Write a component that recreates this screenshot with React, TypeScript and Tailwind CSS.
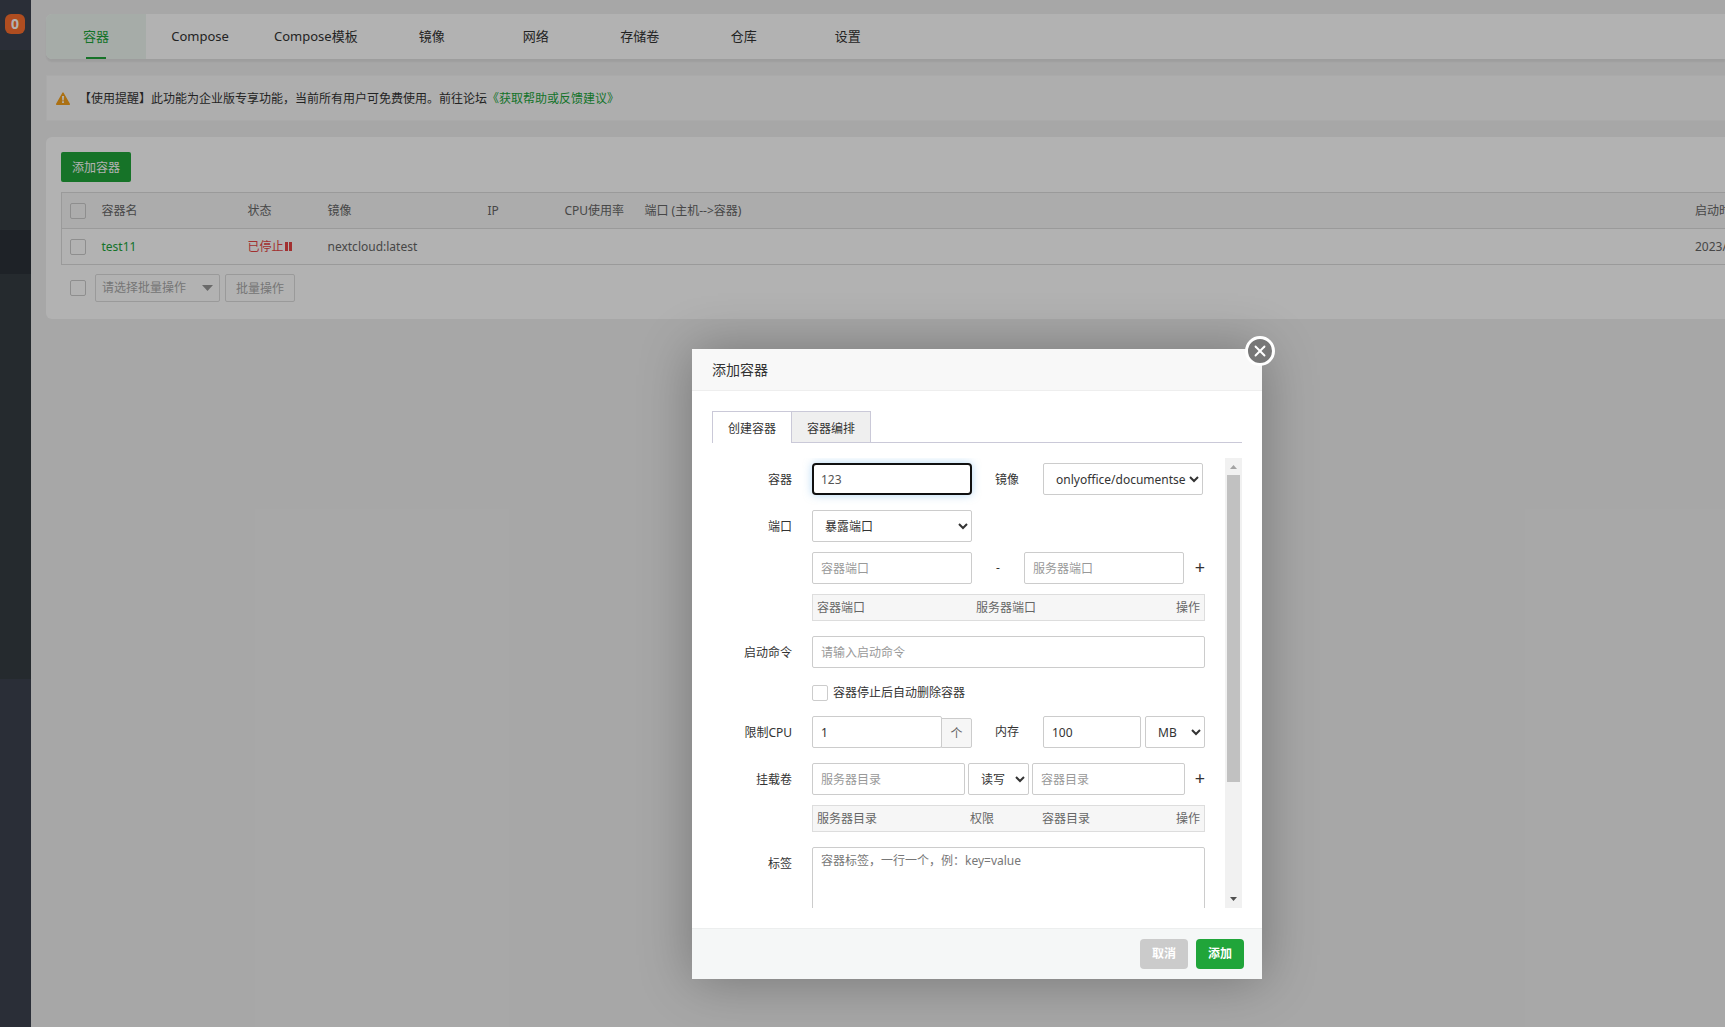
import { X } from "lucide-react"

const tabs = ["容器", "Compose", "Compose模板", "镜像", "网络", "存储卷", "仓库", "设置"]

const field = "h-8 rounded-xs border border-[#ccc] bg-white px-2 text-xs text-[#333] placeholder:text-[#999]"
const select = "h-8 rounded-xs border border-[#ccc] bg-white pl-2 text-xs text-[#333]"
const checkbox = "size-4 shrink-0 appearance-none rounded-xs border border-[#ccc]"
const rowLabel = "w-20 shrink-0 text-right leading-[34px]"

const Sidebar = () => (
  <aside className="flex w-[31px] shrink-0 flex-col bg-[#3d424f]">
    <div className="h-[50px] pt-[14px] pl-[5px]">
      <span className="flex h-5 w-5 items-center justify-center rounded-md bg-[#fb6f2e] text-sm font-bold text-white">
        0
      </span>
    </div>
    <div className="h-[180px] bg-[#363d42]" />
    <div className="h-11 bg-[#2c3138]" />
    <div className="h-[405px] bg-[#363d42]" />
  </aside>
)

const NavTabs = () => (
  <nav className="flex gap-1 rounded-l-md bg-white text-[13px] shadow-[0_3px_2px_rgba(0,0,0,0.06)]">
    {tabs.map((tab, i) => (
      <a
        key={tab}
        href="#"
        className={
          i === 0
            ? "relative flex h-[45px] min-w-[100px] items-center justify-center rounded-l-md bg-[#eef7f1] px-5 text-[#20a53a]"
            : "flex h-[45px] min-w-[100px] items-center justify-center px-5 text-[#333]"
        }
      >
        {tab}
        {i === 0 && <span className="absolute bottom-0 h-0.5 w-5 bg-[#20a53a]" />}
      </a>
    ))}
  </nav>
)

const Notice = () => (
  <div className="mt-4 flex h-[46px] items-center border border-r-0 border-[#f4f4f4] bg-[#fafafa] pl-[9px]">
    <svg className="mr-[9px] h-[13px] w-[14px]" viewBox="0 0 14 13">
      <path d="M7 1 L13.300 12.200 H0.700 Z" fill="#f5a11c" stroke="#f5a11c" strokeWidth="1.400" strokeLinejoin="round" />
      <path d="M6 4 h2 l-.3 4.400 h-1.400 z M6.100 9.300 h1.800 v1.700 h-1.800 z" fill="#fff" />
    </svg>
    <p className="pt-0.5">
      【使用提醒】此功能为企业版专享功能，当前所有用户可免费使用。前往论坛
      <a href="#" className="text-[#20a53a]">《获取帮助或反馈建议》</a>
    </p>
  </div>
)

const ContainerTable = () => (
  <section className="mt-4 rounded-l-md bg-white pt-[15px] pb-[17px] pl-[15px]">
    <button type="button" className="h-[30px] rounded-xs bg-[#20a53a] px-[11px] pt-0.5 text-white">
      添加容器
    </button>
    <table className="mt-[10px] w-full table-fixed border-collapse border border-r-0 border-[#ddd] text-left text-[#666]">
      <colgroup>
        <col className="w-8" />
        <col className="w-[147px]" />
        <col className="w-20" />
        <col className="w-40" />
        <col className="w-[77px]" />
        <col className="w-20" />
        <col />
        <col className="w-[38px]" />
      </colgroup>
      <thead>
        <tr className="h-9 border-b border-[#ddd] bg-[#f6f6f6]">
          <th className="pl-2"><input type="checkbox" aria-label="全选" className={`${checkbox} block`} /></th>
          <th className="pl-2 font-normal">容器名</th>
          <th className="pl-[7px] font-normal">状态</th>
          <th className="pl-[7px] font-normal">镜像</th>
          <th className="pl-[7px] font-normal">IP</th>
          <th className="pl-[7px] font-normal whitespace-nowrap">CPU使用率</th>
          <th className="pl-[7px] font-normal">端口 (主机--&gt;容器)</th>
          <th className="overflow-hidden pl-2 font-normal whitespace-nowrap">启动时间</th>
        </tr>
      </thead>
      <tbody>
        <tr className="h-9">
          <td className="pl-2"><input type="checkbox" aria-label="test11" className={`${checkbox} block`} /></td>
          <td className="pl-2"><a href="#" className="text-[#20a53a]">test11</a></td>
          <td className="pl-[7px]">
            <span className="flex items-center text-[#e84545]">
              已停止
              <svg className="ml-px h-[9px] w-[7px]" viewBox="0 0 7 9" fill="currentColor">
                <path d="M0 0h3v9H0zM4 0h3v9H4z" />
              </svg>
            </span>
          </td>
          <td className="pl-[7px]">nextcloud:latest</td>
          <td />
          <td />
          <td />
          <td className="overflow-hidden pl-2 whitespace-nowrap">2023/</td>
        </tr>
      </tbody>
    </table>
    <div className="mt-[9px] flex items-center pl-[9px]">
      <input type="checkbox" aria-label="批量选择" className={checkbox} />
      <button type="button" className="ml-[9px] flex h-7 w-[125px] items-center justify-between rounded-xs border border-[#ddd] px-1.5 text-[#aaa]">
        请选择批量操作
        <svg className="h-1.5 w-[11px]" viewBox="0 0 11 6" fill="#999">
          <path d="M0 0h11L5.500 6z" />
        </svg>
      </button>
      <button type="button" className="ml-[5px] h-7 w-[70px] rounded-xs border border-[#ddd] pt-0.5 text-[#aaa]">
        批量操作
      </button>
    </div>
  </section>
)

const ScrollBar = () => (
  <div className="flex w-[17px] shrink-0 flex-col items-center bg-[#f1f1f1]" aria-hidden="true">
    <svg className="h-[17px] w-[17px]" viewBox="0 0 17 17"><path d="M5 11 L8.500 7 L12 11z" fill="#a3a3a3" /></svg>
    <div className="h-[307px] w-[13px] bg-[#c1c1c1]" />
    <svg className="mt-auto h-[17px] w-[17px]" viewBox="0 0 17 17"><path d="M5 6 L8.500 10 L12 6z" fill="#505050" /></svg>
  </div>
)

const CreateForm = () => (
  <form className="h-full flex-1 overflow-hidden pt-[5px]">
    <div className="flex h-8">
      <label htmlFor="name" className={rowLabel}>容器</label>
      <input
        id="name"
        defaultValue="123"
        className="ml-5 h-8 w-40 rounded-sm border-2 border-[#101010] px-[7px] text-xs text-[#555] shadow-[0_0_8px_rgba(102,175,233,0.5)]"
      />
      <label htmlFor="image" className="ml-[23px] w-12 leading-[34px]">镜像</label>
      <select id="image" className={`${select} w-40`}>
        <option>onlyoffice/documentserver:latest</option>
      </select>
    </div>

    <div className="mt-[15px] flex">
      <label htmlFor="port" className={rowLabel}>端口</label>
      <div className="ml-5 w-[393px]">
        <select id="port" className={`${select} block w-40`}>
          <option>暴露端口</option>
        </select>
        <div className="mt-[10px] flex h-8 items-center">
          <input aria-label="容器端口" placeholder="容器端口" className={`${field} w-40`} />
          <span className="w-[52px] text-center">-</span>
          <input aria-label="服务器端口" placeholder="服务器端口" className={`${field} w-40`} />
          <button type="button" className="ml-auto pb-0.5 text-lg leading-7">+</button>
        </div>
        <table className="mt-[10px] w-full table-fixed border-separate border-spacing-0 border border-[#ddd] bg-[#f6f6f6] text-left text-[#666]">
          <thead>
            <tr className="h-[25px]">
              <th className="w-[159px] pl-1 font-normal">容器端口</th>
              <th className="pl-1 font-normal">服务器端口</th>
              <th className="w-12 pr-1 text-right font-normal">操作</th>
            </tr>
          </thead>
        </table>
      </div>
    </div>

    <div className="mt-[15px] flex h-8">
      <label htmlFor="command" className={rowLabel}>启动命令</label>
      <input id="command" placeholder="请输入启动命令" className={`${field} ml-5 w-[393px]`} />
    </div>

    <div className="mt-[17px] ml-[100px] flex items-center gap-[5px]">
      <input id="autoRemove" type="checkbox" className={checkbox} />
      <label htmlFor="autoRemove" className="leading-4">容器停止后自动删除容器</label>
    </div>

    <div className="mt-[15px] flex h-8">
      <label htmlFor="cpu" className={rowLabel}>限制CPU</label>
      <div className="ml-5 flex w-40 items-end">
        <input id="cpu" defaultValue="1" className={`${field} w-[130px]`} />
        <span className="-ml-px flex h-[30px] w-[31px] items-center justify-center rounded-r-xs border border-[#ccc] bg-[#f6f6f6] pt-0.5 text-[#666]">
          个
        </span>
      </div>
      <label htmlFor="memory" className="ml-[23px] w-12 leading-8">内存</label>
      <input id="memory" defaultValue="100" className={`${field} w-[98px]`} />
      <select aria-label="单位" className={`${select} ml-1 w-[60px]`}>
        <option>MB</option>
      </select>
    </div>

    <div className="mt-[15px] flex">
      <label htmlFor="volume" className={rowLabel}>挂载卷</label>
      <div className="ml-5 w-[393px]">
        <div className="flex h-8 items-center">
          <input id="volume" placeholder="服务器目录" className={`${field} w-[153px]`} />
          <select aria-label="权限" className={`${select} mx-[3px] w-[61px]`}>
            <option>读写</option>
          </select>
          <input aria-label="容器目录" placeholder="容器目录" className={`${field} w-[153px]`} />
          <button type="button" className="ml-auto pb-0.5 text-lg leading-7">+</button>
        </div>
        <table className="mt-[10px] w-full table-fixed border-separate border-spacing-0 border border-[#ddd] bg-[#f6f6f6] text-left text-[#666]">
          <thead>
            <tr className="h-[25px]">
              <th className="w-[153px] pl-1 font-normal">服务器目录</th>
              <th className="w-[72px] pl-1 font-normal">权限</th>
              <th className="pl-1 font-normal">容器目录</th>
              <th className="w-12 pr-1 text-right font-normal">操作</th>
            </tr>
          </thead>
        </table>
      </div>
    </div>

    <div className="mt-[15px] flex">
      <label htmlFor="labels" className={rowLabel}>标签</label>
      <textarea
        id="labels"
        placeholder="容器标签，一行一个，例：key=value"
        className="ml-5 h-[72px] w-[393px] rounded-xs border border-[#ccc] px-2 py-1 text-xs leading-[18px] placeholder:text-[#777]"
      />
    </div>
  </form>
)

const AddContainerDialog = () => (
  <div
    role="dialog"
    aria-label="添加容器"
    className="absolute top-[349px] left-[692px] w-[570px] bg-white text-[#333] shadow-[1px_1px_50px_rgba(0,0,0,0.3)]"
  >
    <h2 className="h-[42px] border-b border-[#eee] bg-[#f8f8f8] pl-5 text-sm leading-[41px]">添加容器</h2>
    <button
      type="button"
      aria-label="关闭"
      className="absolute -top-[13px] -right-[13px] flex size-[30px] items-center justify-center rounded-full border-3 border-white bg-[#777] text-white"
    >
      <X size={18} strokeWidth={2.500} />
    </button>

    <div className="px-5 pt-5 pb-5">
      <div className="flex border-b border-[#cac9d8]">
        <button type="button" className="-mb-px h-8 w-20 border border-b-0 border-[#cac9d8] bg-white pt-0.5">创建容器</button>
        <button type="button" className="h-[31px] w-[79px] border border-b-0 border-l-0 border-[#cac9d8] bg-[#efefef] pt-1">容器编排</button>
      </div>
      <div className="mt-[15px] flex h-[450px]">
        <CreateForm />
        <ScrollBar />
      </div>
    </div>

    <div className="flex justify-end gap-2 border-t border-[#eceeee] bg-[#f5f7f7] py-[10px] pr-[18px] font-bold text-white">
      <button type="button" className="h-[30px] w-12 rounded-sm bg-[#cbcbcb]">取消</button>
      <button type="button" className="h-[30px] w-12 rounded-sm bg-[#20a53a]">添加</button>
    </div>
  </div>
)

export default function App() {
  return (
    <div className="relative flex min-h-screen overflow-hidden bg-[#f0f0f0] font-['Noto_Sans','Noto_Sans_CJK_SC',sans-serif] text-xs text-[#333]">
      <Sidebar />
      <main className="min-w-0 flex-1 pt-[14px] pl-[15px]">
        <NavTabs />
        <Notice />
        <ContainerTable />
      </main>
      <div className="absolute inset-0 bg-black/30" />
      <AddContainerDialog />
    </div>
  )
}
